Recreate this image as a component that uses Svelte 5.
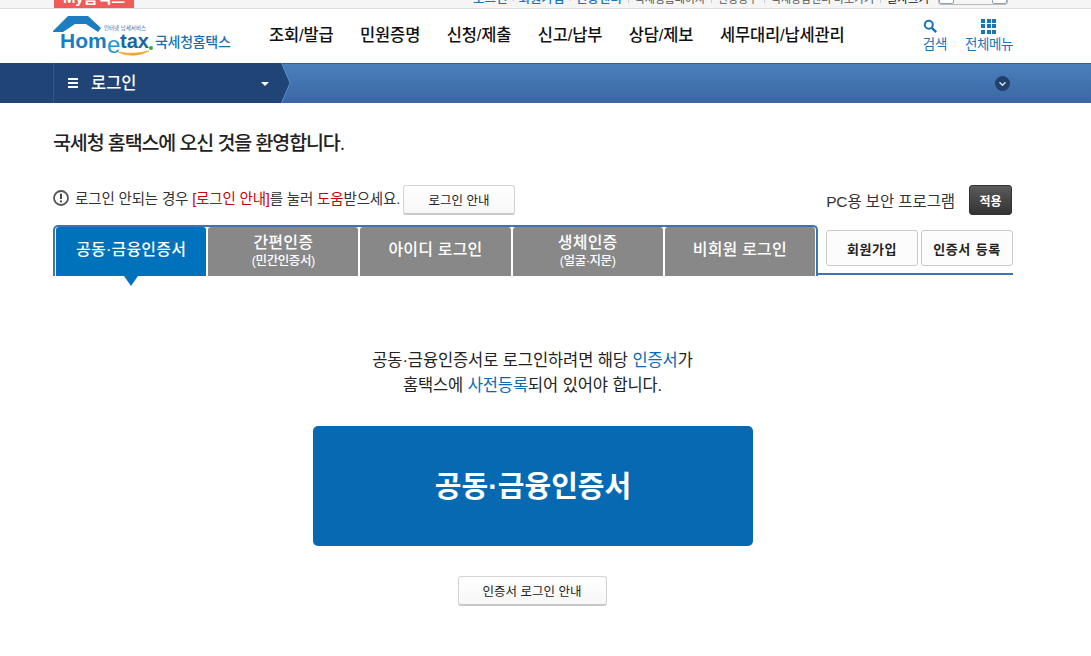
<script>
  const navItems = ["조회/발급", "민원증명", "신청/제출", "신고/납부", "상담/제보", "세무대리/납세관리"];
  const tabs = [
    { label: "공동·금융인증서", active: true },
    { label: "간편인증", sub: "(민간인증서)" },
    { label: "아이디 로그인" },
    { label: "생체인증", sub: "(얼굴·지문)" },
    { label: "비회원 로그인" }
  ];
</script>

<div class="page">
  <!-- Top utility strip, mostly scrolled out of view -->
  <div class="util">
    <div class="wrap util-inner">
      <span class="my-tag"><span>My홈택스</span></span>
      <div class="util-links">
        <span class="blue">로그인 · 회원가입 · 인증센터</span>
        <span class="sep"></span>
        <span>국세청홈페이지</span>
        <span class="sep"></span>
        <span>현영영수</span>
        <span class="sep"></span>
        <span>국세상담센터 바로가기</span>
        <span class="sep"></span>
        <span class="dark">글자크기</span>
        <span class="size-box"><i></i><i></i></span>
      </div>
    </div>
  </div>

  <!-- Header -->
  <header class="header">
    <div class="wrap header-inner">
      <div class="logo">
        <svg class="logo-mark" width="102" height="46" viewBox="0 0 102 46">
          <path d="M0 16 L15 1 H35 L48 13 L45 17 L33 9 H22 L10 17 H0 Z" fill="#1c7ec0" />
          <path d="M65 37 Q80 44 96 36 Q80 40 65 37 Z" fill="#f4a52c" stroke="#f4a52c" stroke-width="0.800" />
          <circle cx="98" cy="33" r="2" fill="#3aa64a" />
          <text x="7" y="33" class="logo-home">Hom</text>
          <text x="54" y="38" class="logo-e">e</text>
          <text x="67" y="33" class="logo-tax">tax</text>
          <text x="51" y="15" class="logo-small">인터넷 납세서비스</text>
        </svg>
        <span class="logo-name">국세청홈택스</span>
      </div>
      <nav class="nav">
        {#each navItems as item}
          <span>{item}</span>
        {/each}
      </nav>
      <div class="tools">
        <div class="tool">
          <svg class="search-icon" width="15" height="15" viewBox="0 0 15 15">
            <circle cx="5.800" cy="5.800" r="4" fill="none" stroke="#1a74b8" stroke-width="2" />
            <path d="M8.800 8.800 L13.200 13.200" stroke="#1a74b8" stroke-width="2.400" />
          </svg>
          <span>검색</span>
        </div>
        <div class="tool">
          <div class="dots">
            {#each Array(9) as _}
              <i></i>
            {/each}
          </div>
          <span>전체메뉴</span>
        </div>
      </div>
    </div>
  </header>

  <!-- Location bar -->
  <div class="locbar">
    <div class="wrap locbar-inner">
      <div class="crumb">
        <div class="burger"><i></i><i></i><i></i></div>
        <span class="crumb-label">로그인</span>
        <span class="caret"></span>
        <svg class="crumb-tip" width="12" height="40" viewBox="0 0 12 40">
          <path d="M0 0 H1.500 L10 20 L1.500 40 H0 Z" fill="#204475" />
          <path d="M1.500 0 L10 20 L1.500 40" fill="none" stroke="#5b8cc4" stroke-width="1" />
        </svg>
      </div>
      <span class="loc-toggle">
        <svg width="15" height="15" viewBox="0 0 15 15">
          <circle cx="7.500" cy="7.500" r="7.500" fill="#22406c" />
          <path d="M4.500 6.200 L7.500 9.200 L10.500 6.200" fill="none" stroke="#d7e1ee" stroke-width="1.400" />
        </svg>
      </span>
    </div>
  </div>

  <main class="wrap content">
    <h1>국세청 홈택스에 오신 것을 환영합니다.</h1>

    <div class="notice-row">
      <div class="notice">
        <svg width="16" height="16" viewBox="0 0 16 16">
          <circle cx="8" cy="8" r="7" fill="none" stroke="#555" stroke-width="1.800" />
          <path d="M8 3.800 V9" stroke="#444" stroke-width="2" />
          <circle cx="8" cy="11.400" r="1.100" fill="#444" />
        </svg>
        <span>로그인 안되는 경우 <em>[로그인 안내]</em>를 눌러 <em>도움</em>받으세요.</span>
        <button class="btn guide">로그인 안내</button>
      </div>
      <div class="security">
        <span>PC용 보안 프로그램</span>
        <button class="apply">적용</button>
      </div>
    </div>

    <div class="tabs-row">
      <div class="tabs">
        {#each tabs as tab}
          <div class="tab" class:active={tab.active} class:double={tab.sub}>
            <span class="tab-label">{tab.label}</span>
            {#if tab.sub}<span class="tab-sub">{tab.sub}</span>{/if}
          </div>
        {/each}
      </div>
      <div class="tab-side">
        <button class="side-btn">회원가입</button>
        <button class="side-btn">인증서 등록</button>
      </div>
    </div>

    <div class="cert">
      <p>공동·금융인증서로 로그인하려면 해당 <b>인증서</b>가<br />홈택스에 <b>사전등록</b>되어 있어야 합니다.</p>
      <button class="cert-btn">공동·금융인증서</button>
      <button class="btn cert-guide">인증서 로그인 안내</button>
    </div>
  </main>
</div>

<style>
  :global(body) {
    margin: 0;
    background: #fff;
  }

  .page {
    font-family: "Liberation Sans", "Noto Sans CJK KR", sans-serif;
    color: #222;
    height: 656px;
    overflow: hidden;
  }

  .wrap {
    width: 960px;
    margin-left: 53px;
  }

  button {
    font-family: inherit;
    cursor: pointer;
    padding: 0;
  }

  /* Utility strip */
  .util {
    height: 8px;
    background: #f5f5f5;
    border-bottom: 1px solid #ddd;
    overflow: hidden;
  }

  .util-inner {
    display: flex;
    justify-content: space-between;
    height: 8px;
    width: 955px;
  }

  .my-tag {
    width: 80px;
    height: 8px;
    margin-left: 1px;
    background: #ee5b58;
    color: #fff;
    font-size: 15px;
    font-weight: 700;
    line-height: 0;
    text-align: center;
  }

  .my-tag span {
    display: block;
    margin-top: -2px;
  }

  .util-links {
    display: flex;
    align-items: center;
    gap: 6px;
    font-size: 11px;
    letter-spacing: -0.100px;
    line-height: 0;
    color: #555;
    height: 0;
    margin-top: -1px;
    white-space: nowrap;
  }

  .util-links .blue {
    color: #1a74b8;
    font-size: 12.500px;
    letter-spacing: 0;
    font-weight: 500;
  }

  .util-links .dark {
    color: #222;
    font-size: 11.500px;
    margin-right: 3px;
  }

  .sep {
    width: 1px;
    height: 8px;
    background: #ccc;
  }

  .size-box {
    display: flex;
    justify-content: space-between;
    width: 70px;
    height: 12px;
    margin-top: -1px;
    border: 1px solid #bbb;
    border-radius: 3px;
    box-sizing: border-box;
  }

  .size-box i {
    width: 13px;
    border: 1px solid #8aa0bd;
    border-radius: 2px;
    background: #fff;
  }

  /* Header */
  .header {
    height: 54px;
    background: #fff;
  }

  .header-inner {
    display: flex;
    align-items: center;
    height: 54px;
  }

  .logo {
    display: flex;
    align-items: flex-end;
    width: 216px;
    height: 54px;
  }

  .logo-mark {
    margin-top: 6px;
    align-self: flex-start;
    flex: none;
  }

  .logo-home, .logo-tax {
    font-size: 21px;
    font-weight: 700;
    fill: #1c7ec0;
  }

  .logo-tax {
    font-size: 20px;
    fill: #17679f;
  }

  .logo-e {
    font-size: 24px;
    fill: #1c9ad0;
  }

  .logo-small {
    font-size: 5.500px;
    fill: #3a6ea5;
  }

  .logo-name {
    color: #1b6fb0;
    font-size: 14px;
    font-weight: 500;
    letter-spacing: -0.300px;
    margin: 0 0 12px 0;
    white-space: nowrap;
  }

  .nav {
    display: flex;
    gap: 26.500px;
    font-size: 16.500px;
    font-weight: 500;
    color: #111;
    letter-spacing: -0.150px;
    white-space: nowrap;
    margin-top: -5px;
  }

  .tools {
    display: flex;
    gap: 18px;
    margin-left: auto;
    margin-top: 1px;
  }

  .tool {
    display: flex;
    flex-direction: column;
    align-items: center;
    gap: 1px;
    color: #1a74b8;
    font-size: 13.500px;
    letter-spacing: -0.400px;
    line-height: 20px;
  }

  .search-icon {
    align-self: flex-start;
  }

  .dots {
    display: grid;
    grid-template-columns: repeat(3, 4px);
    gap: 1.500px;
    height: 15px;
  }

  .dots i {
    width: 4px;
    height: 4px;
    background: #1a74b8;
  }

  /* Location bar */
  .locbar {
    height: 40px;
    background: linear-gradient(#4a80bc, #3a67a4);
    box-shadow: inset 0 1px 0 #35608f;
    position: relative;
  }

  .locbar::before {
    content: "";
    position: absolute;
    left: 0;
    top: 0;
    width: 53px;
    height: 40px;
    background: #204475;
  }

  .locbar-inner {
    display: flex;
    justify-content: space-between;
    align-items: center;
    height: 40px;
    position: relative;
  }

  .crumb {
    position: relative;
    display: flex;
    align-items: center;
    width: 227px;
    height: 40px;
    background: #204475;
    border-left: 1px solid #2f5a90;
    box-sizing: border-box;
    color: #fff;
  }

  .burger {
    display: flex;
    flex-direction: column;
    gap: 2px;
    margin: 0 13px 0 14px;
  }

  .burger i {
    width: 10px;
    height: 2px;
    background: #fff;
  }

  .crumb-label {
    font-size: 16.500px;
    font-weight: 500;
    margin-top: -2px;
  }

  .caret {
    position: absolute;
    left: 207px;
    top: 19px;
    border-left: 4px solid transparent;
    border-right: 4px solid transparent;
    border-top: 4px solid #fff;
  }

  .crumb-tip {
    position: absolute;
    left: 226px;
    top: 0;
  }

  .loc-toggle {
    display: flex;
    margin-right: 3px;
  }

  /* Content */
  .content {
    height: 553px;
  }

  h1 {
    margin: 0;
    padding-top: 26px;
    font-size: 19.500px;
    font-weight: 500;
    line-height: 28px;
    letter-spacing: -1.100px;
    color: #222;
  }

  .notice-row {
    display: flex;
    justify-content: space-between;
    align-items: center;
    margin-top: 28px;
    height: 30px;
  }

  .notice {
    display: flex;
    align-items: center;
    font-size: 14.500px;
    color: #333;
    letter-spacing: -0.150px;
  }

  .notice svg {
    margin-right: 6px;
    margin-top: -5px;
  }

  .notice > span {
    margin-top: -5px;
  }

  .notice em {
    font-style: normal;
    color: #c00;
  }

  .btn {
    background: linear-gradient(#fff, #f7f7f7);
    border: 1px solid #d3d3d3;
    border-bottom: 2px solid #c8c8c8;
    border-radius: 3px;
    font-size: 12.500px;
    color: #222;
  }

  .guide {
    width: 112px;
    height: 30px;
    margin-left: 3px;
  }

  .security {
    display: flex;
    align-items: center;
    gap: 14px;
    margin-right: 1px;
    font-size: 15.500px;
    letter-spacing: -0.100px;
    color: #333;
  }

  .apply {
    width: 43px;
    height: 30px;
    background: linear-gradient(#5a5a5a, #333);
    border: 1px solid #333;
    border-radius: 3px;
    color: #fff;
    font-size: 12px;
    font-weight: 700;
  }

  .tabs-row {
    display: flex;
    margin-top: 10px;
  }

  .tabs {
    display: flex;
    gap: 2px;
    width: 765px;
    height: 51px;
    box-sizing: border-box;
    border: solid #3f74b3;
    border-width: 2px 2px 0 2px;
    border-radius: 5px 5px 0 0;
    padding: 0 0 0 1px;
  }

  .tab {
    position: relative;
    display: flex;
    flex-direction: column;
    align-items: center;
    justify-content: center;
    flex: none;
    width: 150.200px;
    height: 49px;
    padding-bottom: 3px;
    box-sizing: border-box;
    background: #888;
    border-radius: 3px 3px 0 0;
    color: #fff;
  }

  .tab.double {
    padding-bottom: 2px;
  }

  .tab.active {
    background: #0072bc;
  }

  .tab.active::after {
    content: "";
    position: absolute;
    left: 68px;
    top: 49px;
    border-left: 7px solid transparent;
    border-right: 7px solid transparent;
    border-top: 10px solid #0072bc;
  }

  .tab-label {
    font-size: 16px;
    font-weight: 500;
    letter-spacing: 0.200px;
    line-height: 20px;
  }

  .tab-sub {
    font-size: 12.500px;
    font-weight: 500;
    letter-spacing: -0.400px;
    line-height: 16px;
  }

  .tab-side {
    flex: 1;
    display: flex;
    gap: 3px;
    align-items: flex-start;
    padding: 5px 0 0 8px;
    height: 43px;
    border-bottom: 2px solid #3f74b3;
  }

  .side-btn {
    width: 92px;
    height: 36px;
    background: #fcfcfc;
    border: 1px solid #c9c9c9;
    border-radius: 3px;
    font-size: 13px;
    font-weight: 700;
    color: #222;
    letter-spacing: 0.500px;
    word-spacing: 1px;
  }

  .cert {
    display: flex;
    flex-direction: column;
    align-items: center;
    width: 960px;
  }

  .cert p {
    margin: 72px 0 0 -1px;
    font-size: 16.500px;
    line-height: 25px;
    text-align: center;
    color: #222;
    letter-spacing: -0.100px;
  }

  .cert p b {
    font-weight: 400;
    color: #0a6ab3;
  }

  .cert-btn {
    width: 440px;
    height: 120px;
    margin-top: 28px;
    padding-bottom: 5px;
    background: #0769b2;
    border: none;
    border-radius: 5px;
    color: #fff;
    font-size: 29px;
    font-weight: 700;
  }

  .cert-guide {
    width: 149px;
    height: 30px;
    margin: 30px 2px 0 0;
  }
</style>
